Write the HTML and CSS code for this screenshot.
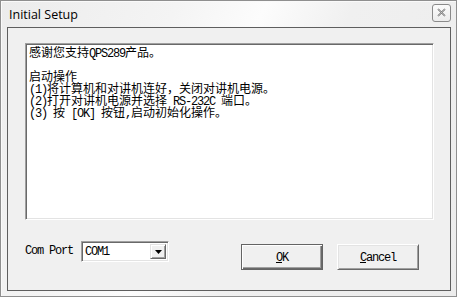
FILE: index.html
```html
<!DOCTYPE html>
<html lang="zh-CN">
<head>
    <meta charset="UTF-8">
    <title>Initial Setup</title>
    <link rel="stylesheet" href="styles.css">
</head>
<body>
    <div class="window">
        <div class="titlebar">
            <span class="title">Initial Setup</span>
            <span class="close">
                <svg width="9" height="9" viewBox="0 0 9 9">
                    <path d="M1 1 L8 8 M8 1 L1 8" stroke="#6a6a6a" stroke-width="1.6" fill="none"/>
                    <path d="M1 1 L8 8 M8 1 L1 8" stroke="#e8e8e8" stroke-width="0.5" fill="none"/>
                </svg>
            </span>
        </div>
        <div class="client">
            <div class="memo">
                <p>感谢您支持<span class="en">QPS289</span>产品。</p>
                <p>&nbsp;</p>
                <p>启动操作</p>
                <p><span class="en">(1)</span>将计算机和对讲机连好，关闭对讲机电源。</p>
                <p><span class="en">(2)</span>打开对讲机电源并选择<span class="en">&nbsp;RS-232C&nbsp;</span>端口。</p>
                <p><span class="en">(3)&nbsp;</span>按<span class="en">&nbsp;[OK]&nbsp;</span>按钮<span class="en">,</span>启动初始化操作。</p>
            </div>
            <div class="controls">
                <span class="label en">Com Port</span>
                <div class="combo">
                    <span class="value en">COM1</span>
                    <span class="drop">
                        <svg width="7" height="4" viewBox="0 0 7 4"><path d="M0 0 H7 L3.5 4 Z" fill="#000"/></svg>
                    </span>
                </div>
                <button class="btn default"><span class="en"><u>O</u>K</span></button>
                <button class="btn"><span class="en"><u>C</u>ancel</span></button>
            </div>
        </div>
    </div>
</body>
</html>
```

FILE: styles.css
```css
html, body {
    margin: 0;
    padding: 0;
    background: #ffffff;
}
.window {
    box-sizing: border-box;
    width: 457px;
    height: 297px;
    border: 1px solid #8f8f8f;
    background: linear-gradient(115deg, #ececec 0%, #f4f4f4 30%, #fcfcfc 45%, #f0f0f0 60%, #ececec 100%);
    box-shadow: inset 1px 1px 0 #fafafa;
    display: flex;
    flex-direction: column;
}
.titlebar {
    height: 26px;
    display: flex;
    align-items: center;
    justify-content: space-between;
    padding: 0 5px 0 8px;
}
.title {
    font-family: "Open Sans", "Noto Sans", sans-serif;
    font-size: 12.5px;
    color: #000;
    margin-top: 1px;
}
.close {
    box-sizing: border-box;
    width: 19px;
    height: 18px;
    border: 1px solid #8a8a8a;
    border-radius: 3px;
    background: linear-gradient(#fbfbfb, #ececec);
    display: flex;
    align-items: center;
    justify-content: center;
    margin-top: -3px;
}
.client {
    box-sizing: border-box;
    width: 444px;
    height: 264px;
    margin-left: 6px;
    border: 1px solid #5e5e5e;
    background: #f0f0f0;
    display: flex;
    flex-direction: column;
}
.memo {
    box-sizing: border-box;
    width: 409px;
    height: 177px;
    margin: 15px 0 0 17px;
    background: #fff;
    border: 1px solid;
    border-color: #a0a0a0 #ffffff #ffffff #a0a0a0;
    box-shadow: inset 1px 1px 0 #696969, inset -1px -1px 0 #e3e3e3;
    padding: 2px 3px;
    font-family: "Noto Sans CJK SC", sans-serif;
    font-size: 12px;
    line-height: 12px;
    color: #000;
}
.memo p {
    margin: 0;
    height: 12px;
    line-height: 12px;
    white-space: pre;
}
.en {
    font-family: "Liberation Mono", monospace;
    font-size: 12px;
    letter-spacing: -1.2px;
}
.memo .en {
    display: inline-block;
    height: 12px;
    line-height: 12px;
}
.controls {
    display: flex;
    align-items: flex-start;
    margin-top: 21px;
    padding-left: 17px;
}
.label {
    width: 56px;
    line-height: 20px;
    color: #000;
}
.combo {
    box-sizing: border-box;
    width: 88px;
    height: 21px;
    background: #fff;
    border: 1px solid;
    border-color: #a0a0a0 #ffffff #ffffff #a0a0a0;
    box-shadow: inset 1px 1px 0 #696969, inset -1px -1px 0 #e3e3e3;
    display: flex;
    align-items: center;
    justify-content: space-between;
    padding: 2px;
}
.combo .value {
    padding-left: 1px;
    color: #000;
}
.drop {
    box-sizing: border-box;
    width: 16px;
    height: 15px;
    background: #f0f0f0;
    border: 1px solid;
    border-color: #e3e3e3 #696969 #696969 #e3e3e3;
    box-shadow: inset 1px 1px 0 #ffffff, inset -1px -1px 0 #a0a0a0;
    display: flex;
    align-items: center;
    justify-content: center;
}
.btn {
    box-sizing: border-box;
    width: 82px;
    height: 26px;
    margin-top: 3px;
    background: #f0f0f0;
    border: 1px solid;
    border-color: #ffffff #696969 #696969 #ffffff;
    box-shadow: inset 1px 1px 0 #e3e3e3, inset -1px -1px 0 #a0a0a0;
    padding: 0;
    color: #000;
    line-height: 12px;
}
.btn.default {
    margin-left: 72px;
    border-color: #646464;
    box-shadow: inset 1px 1px 0 #ffffff, inset -1px -1px 0 #696969, inset -2px -2px 0 #a0a0a0;
}
.btn + .btn {
    margin-left: 14px;
}
```
